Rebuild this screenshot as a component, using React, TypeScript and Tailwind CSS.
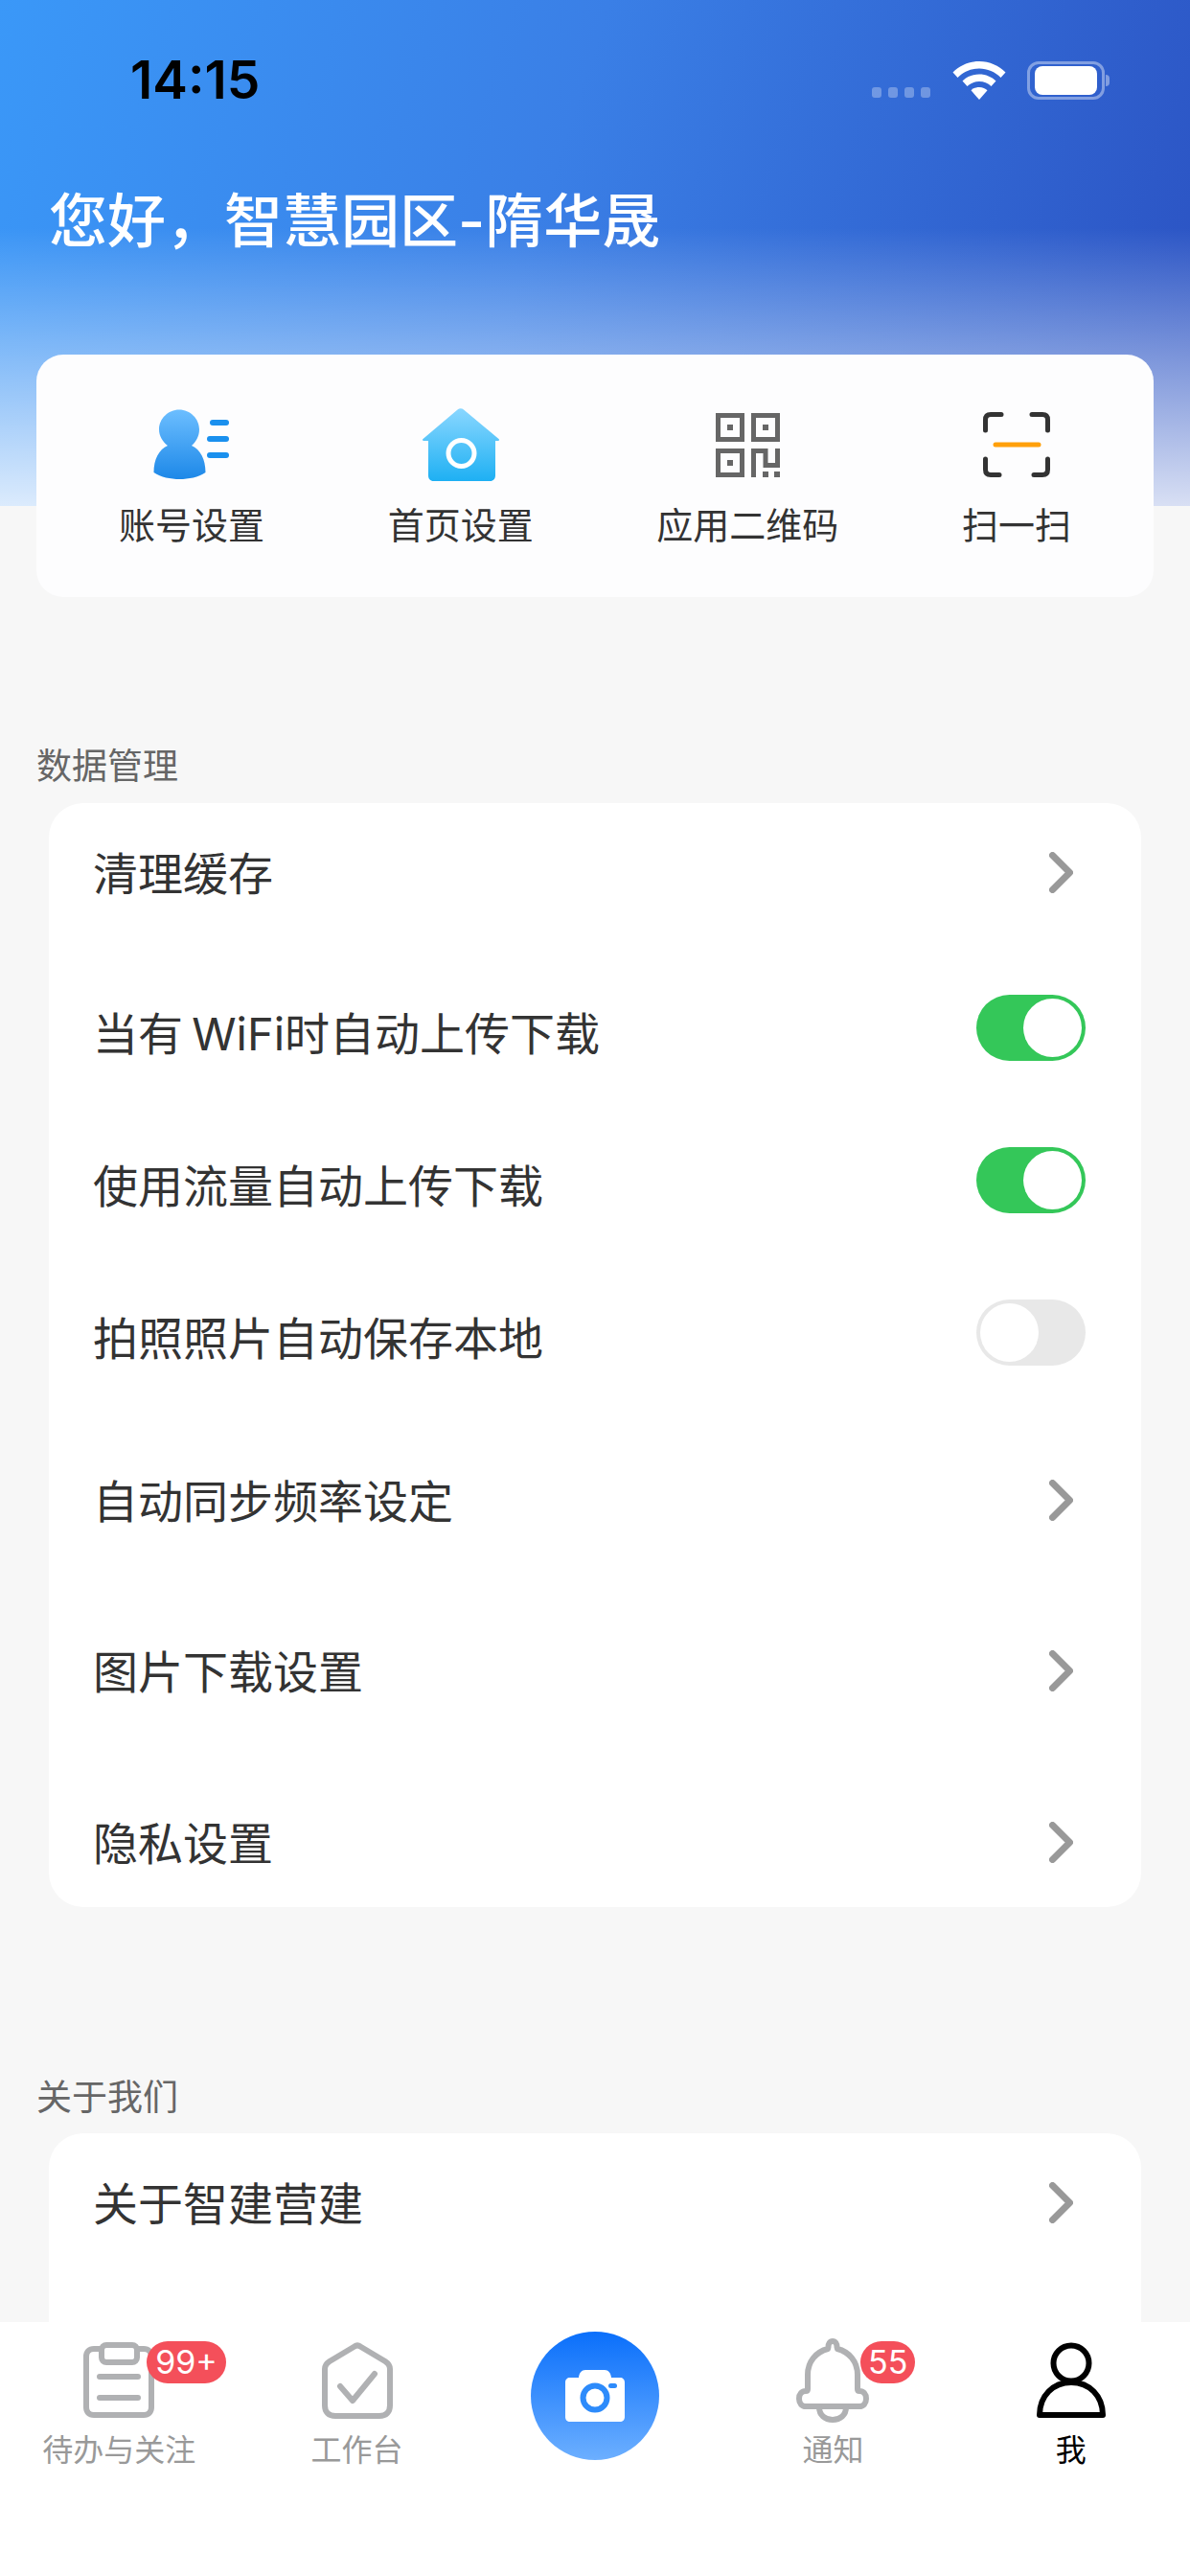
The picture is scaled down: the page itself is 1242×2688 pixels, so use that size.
import React from "react";

const Chevron = () => (
  <svg width="25" height="43" viewBox="0 0 25 43" fill="none" className="shrink-0">
    <path d="M3.5 3.5 L21.5 21.5 L3.5 39.5" stroke="#999999" strokeWidth="7" strokeLinecap="round" strokeLinejoin="round" />
  </svg>
);

const Toggle = ({ on }: { on: boolean }) => (
  <div
    className={
      on
        ? "mb-[10px] flex h-[69px] w-[114px] shrink-0 items-center justify-end rounded-full bg-[#34c759] pr-[4px]"
        : "mb-[10px] flex h-[69px] w-[114px] shrink-0 items-center justify-start rounded-full bg-[#e8e8e8] pl-[4px]"
    }
  >
    <div className="h-[61px] w-[61px] rounded-full bg-white" />
  </div>
);

const Row = ({ label, h, children, mt }: { label: string; h: string; children: React.ReactNode; mt?: string }) => (
  <div className={`flex items-center justify-between pl-[46px] ${h} ${mt ?? ""}`}>
    <span className="pt-[2px] text-[47px] leading-none text-[#333333] [word-spacing:-4px]">{label}</span>
    {children}
  </div>
);

const ChevronRow = ({ label, h, mt }: { label: string; h: string; mt?: string }) => (
  <Row label={label} h={h} mt={mt}>
    <div className="pr-[71px]">
      <Chevron />
    </div>
  </Row>
);

const ToggleRow = ({ label, on, mt }: { label: string; on: boolean; mt?: string }) => (
  <Row label={label} h="h-[159px]" mt={mt}>
    <div className="pr-[58px]">
      <Toggle on={on} />
    </div>
  </Row>
);

const PersonIcon = () => (
  <svg width="80" height="76" viewBox="0 0 80 76" fill="none">
    <defs>
      <linearGradient id="pg" x1="0" y1="0" x2="0" y2="1">
        <stop offset="0" stopColor="#6cbeff" />
        <stop offset="1" stopColor="#1d88e8" />
      </linearGradient>
    </defs>
    <path
      d="M27 1.5 C38.5 1.5 48 11 48 22 C48 29.5 44.5 35 40 39 C49 43 54.5 53 54.5 67 C47 72 37 74 27.5 74 C18 74 8 72 0.5 67 C0.5 53 6 43 15 39 C10 35 6 29.5 6 22 C6 11 15.5 1.5 27 1.5 Z"
      fill="url(#pg)"
    />
    <rect x="59" y="12" width="20" height="6" rx="3" fill="#1a90ee" />
    <rect x="56" y="29" width="23" height="6" rx="3" fill="#1a90ee" />
    <rect x="56" y="46" width="23" height="6" rx="3" fill="#1a90ee" />
  </svg>
);

const HomeIcon = () => (
  <svg width="82" height="76" viewBox="0 0 82 76" fill="none">
    <defs>
      <linearGradient id="hg" x1="0" y1="0" x2="0" y2="1">
        <stop offset="0" stopColor="#8ad7ff" />
        <stop offset="1" stopColor="#1eb0f3" />
      </linearGradient>
    </defs>
    <path
      d="M37.5 1.5 C39.5 -0.3 42 -0.3 44 1.5 L80.5 32 C81.5 33 81 34 80 34 L77 34 L77 70 C77 73.5 75 76 71.5 76 L12.5 76 C9 76 7 73.5 7 70 L7 34 L2 34 C1 34 0.5 33 1.5 32 Z"
      fill="url(#hg)"
    />
    <circle cx="41.5" cy="47" r="13.5" stroke="#ffffff" strokeWidth="5" />
  </svg>
);

const QrIcon = () => (
  <svg width="67" height="67" viewBox="0 0 67 67" fill="none">
    <g stroke="#666666" strokeWidth="5">
      <rect x="2.5" y="2.5" width="25" height="25" />
      <rect x="39.5" y="2.5" width="25" height="25" />
      <rect x="2.5" y="39.5" width="25" height="25" />
      <path d="M39.5 67 V39.5 H52 V54.5 H64.5 V37" />
    </g>
    <g fill="#666666">
      <rect x="12" y="12" width="6" height="6" />
      <rect x="49" y="12" width="6" height="6" />
      <rect x="12" y="49" width="6" height="6" />
      <rect x="49" y="61" width="6" height="6" />
      <rect x="61" y="61" width="6" height="6" />
    </g>
  </svg>
);

const ScanIcon = () => (
  <svg width="70" height="68" viewBox="0 0 70 68" fill="none">
    <g stroke="#333333" strokeWidth="5" strokeLinecap="round">
      <path d="M2.5 19 V8 C2.5 4.5 4.5 2.5 8 2.5 H19" />
      <path d="M51 2.5 H62 C65.5 2.5 67.5 4.5 67.5 8 V19" />
      <path d="M2.5 49 V60 C2.5 63.5 4.5 65.5 8 65.5 H17" />
      <path d="M53 65.5 H62 C65.5 65.5 67.5 63.5 67.5 60 V49" />
    </g>
    <path d="M13 34 H58" stroke="#ffa00a" strokeWidth="5" strokeLinecap="round" />
  </svg>
);

const QuickItem = ({ label, children }: { label: string; children: React.ReactNode }) => (
  <div className="flex flex-col items-center">
    <div className="flex h-[76px] items-center justify-center">{children}</div>
    <span className="mt-[27px] text-[38px] leading-none text-[#333333]">{label}</span>
  </div>
);

const WifiIcon = () => (
  <svg width="56" height="40" viewBox="0 0 56 40" fill="#ffffff">
    <path d="M28 0 C39 0 48.500 4.500 55.500 11.500 L50.500 17 C44.500 11 36.500 7.500 28 7.500 C19.500 7.500 11.500 11 5.500 17 L0.500 11.500 C7.500 4.500 17 0 28 0 Z" />
    <path d="M28 13.500 C35 13.500 41 16.200 45.500 20.500 L40.500 26 C37 22.800 32.800 21 28 21 C23.200 21 19 22.800 15.500 26 L10.500 20.500 C15 16.200 21 13.500 28 13.500 Z" />
    <path d="M28 27 C31.500 27 34.500 28.300 36.500 30.300 L28 40 L19.500 30.300 C21.500 28.300 24.500 27 28 27 Z" />
  </svg>
);

const TabLabel = ({ label, active }: { label: string; active?: boolean }) => (
  <span className={active ? "text-[32px] leading-none text-black" : "text-[32px] leading-none text-[#999999]"}>{label}</span>
);

const Badge = ({ text, w, left }: { text: string; w: string; left: string }) => (
  <span
    className={`absolute top-[20px] flex h-[44px] items-center justify-center rounded-[22px] bg-[#f44f5a] text-[34px] leading-none text-white ${w} ${left}`}
  >
    {text}
  </span>
);

export default function App() {
  return (
    <div className="flex h-[2688px] w-[1242px] flex-col overflow-hidden bg-[#f7f7f7] font-[Inter,'Noto_Sans_CJK_SC',sans-serif]">
      <main className="min-h-0 flex-1 overflow-hidden">
        <header className="h-[528px] bg-[linear-gradient(to_bottom,rgba(255,255,255,0)_45%,rgba(255,255,255,0.82)_100%),linear-gradient(108deg,#3a98f8_0%,#3a7fe6_45%,#2a50c1_100%)]">
          <div className="flex h-[110px] items-end justify-between pl-[136px] pr-[84px]">
            <span className="text-[55px] font-semibold leading-[54px] text-black">14:15</span>
            <div className="mb-[6px] flex items-end">
              <div className="mb-[2px] flex gap-[7px]">
                <span className="h-[11px] w-[10px] rounded-[3px] bg-white/30" />
                <span className="h-[11px] w-[10px] rounded-[3px] bg-white/30" />
                <span className="h-[11px] w-[10px] rounded-[3px] bg-white/30" />
                <span className="h-[11px] w-[10px] rounded-[3px] bg-white/30" />
              </div>
              <div className="ml-[23px]">
                <WifiIcon />
              </div>
              <div className="ml-[22px] flex items-center">
                <div className="flex h-[40px] w-[81px] items-center justify-center rounded-[12px] border-[3px] border-white/40">
                  <div className="h-[30px] w-[65px] rounded-[8px] bg-white" />
                </div>
                <span className="ml-px h-[12px] w-[4px] rounded-r-full bg-white/40" />
              </div>
            </div>
          </div>
          <h1 className="ml-[51px] mt-[91px] text-[61px] font-medium leading-none text-white">您好，智慧园区-隋华晟</h1>
        </header>

        <section className="relative mx-[38px] -mt-[158px] flex h-[253px] justify-between rounded-[28px] bg-[#fdfdfe] pl-[86px] pr-[86px] pt-[56px]">
          <QuickItem label="账号设置">
            <PersonIcon />
          </QuickItem>
          <QuickItem label="首页设置">
            <HomeIcon />
          </QuickItem>
          <QuickItem label="应用二维码">
            <QrIcon />
          </QuickItem>
          <QuickItem label="扫一扫">
            <ScanIcon />
          </QuickItem>
        </section>

        <h2 className="ml-[38px] mt-[158px] text-[37px] font-normal leading-[38px] text-[#666666]">数据管理</h2>
        <section className="mx-[51px] mt-[19px] overflow-hidden rounded-[36px] bg-white">
          <ChevronRow label="清理缓存" h="h-[144px]" />
          <ToggleRow label="当有 WiFi时自动上传下载" on mt="mt-[16px]" />
          <ToggleRow label="使用流量自动上传下载" on />
          <ToggleRow label="拍照照片自动保存本地" on={false} />
          <ChevronRow label="自动同步频率设定" h="h-[178px]" mt="mt-[1px]" />
          <ChevronRow label="图片下载设置" h="h-[178px]" />
          <ChevronRow label="隐私设置" h="h-[136px]" mt="mt-[22px]" />
        </section>

        <h2 className="ml-[38px] mt-[180px] text-[37px] font-normal leading-[38px] text-[#666666]">关于我们</h2>
        <section className="mx-[51px] mt-[18px] h-[400px] rounded-[36px] bg-white">
          <ChevronRow label="关于智建营建" h="h-[144px]" />
        </section>
      </main>

      <nav className="grid h-[265px] shrink-0 grid-cols-5 bg-white">
        <div className="relative flex flex-col items-center">
          <div className="mt-[21px] flex h-[80px] items-center">
            <svg width="74" height="80" viewBox="0 0 74 80" fill="none" stroke="#b0b1b3" strokeWidth="6" strokeLinecap="round" strokeLinejoin="round">
              <path d="M18 7 H11 C6 7 3 10 3 15 V68 C3 73 6 76 11 76 H63 C68 76 71 73 71 68 V15 C71 10 68 7 63 7 H56" />
              <rect x="19" y="3" width="37" height="18" rx="5" />
              <path d="M17 36 H57 M17 58 H57" />
            </svg>
          </div>
          <Badge text="99+" w="w-[83px]" left="left-[153px]" />
          <div className="mt-[17px]">
            <TabLabel label="待办与关注" />
          </div>
        </div>

        <div className="flex flex-col items-center">
          <div className="mt-[21px] flex h-[80px] items-center">
            <svg width="74" height="80" viewBox="0 0 74 80" fill="none" stroke="#b0b1b3" strokeWidth="6" strokeLinecap="round" strokeLinejoin="round">
              <path d="M34 4.500 C36 3 38 3 40 4.500 L66 20 C69 22 71 24 71 28 V66 C71 73 67 77 60 77 H14 C7 77 3 73 3 66 V28 C3 24 5 22 8 20 Z" />
              <path d="M19 46 L32 61 L55 33" />
            </svg>
          </div>
          <div className="mt-[17px]">
            <TabLabel label="工作台" />
          </div>
        </div>

        <div className="flex justify-center">
          <div className="mt-[10px] flex h-[134px] w-[134px] items-center justify-center rounded-full bg-[linear-gradient(to_bottom,#0a6ffb,#6cafff)]">
            <svg width="62" height="54" viewBox="0 0 62 54" fill="none">
              <path
                d="M5 8 H14 C14.500 3 17 0 21 0 H41 C45 0 47.500 3 48 8 H57 C60 8 62 10 62 13 V49 C62 52 60 54 57 54 H5 C2 54 0 52 0 49 V13 C0 10 2 8 5 8 Z"
                fill="#ffffff"
              />
              <circle cx="31" cy="29" r="12.500" stroke="#2d8bfb" strokeWidth="6" />
              <rect x="45" y="14" width="9" height="5" rx="2.500" fill="#2d8bfb" />
            </svg>
          </div>
        </div>

        <div className="relative flex flex-col items-center">
          <div className="mt-[17px] flex h-[88px] items-center">
            <svg width="76" height="88" viewBox="0 0 76 88" fill="none" stroke="#b0b1b3" strokeWidth="6" strokeLinecap="round" strokeLinejoin="round">
              <path d="M38 3 C41 3 42.500 5.500 42.500 9 L43 11 C55 14 64 24 64 38 V53 C64 55 65 55 66 55 C70 55 73 58 73 63 C73 68 70 71 66 71 H10 C6 71 3 68 3 63 C3 58 6 55 10 55 C11 55 12 55 12 53 V38 C12 24 21 14 33 11 L33.500 9 C33.500 5.500 35 3 38 3 Z" />
              <path d="M24 72 C24 80 30 85 38 85 C46 85 52 80 52 72" />
            </svg>
          </div>
          <Badge text="55" w="w-[57px]" left="left-[153px]" />
          <div className="mt-[13px]">
            <TabLabel label="通知" />
          </div>
        </div>

        <div className="flex flex-col items-center">
          <div className="mt-[21px] flex h-[80px] items-center">
            <svg width="72" height="80" viewBox="0 0 72 80" fill="none" stroke="#000000" strokeWidth="6" strokeLinecap="round" strokeLinejoin="round">
              <ellipse cx="36" cy="22" rx="18.500" ry="18.500" />
              <path d="M3 76 C3 56 17 42 36 42 C55 42 69 56 69 76 Z" />
            </svg>
          </div>
          <div className="mt-[17px]">
            <TabLabel label="我" active />
          </div>
        </div>
      </nav>
    </div>
  );
}
